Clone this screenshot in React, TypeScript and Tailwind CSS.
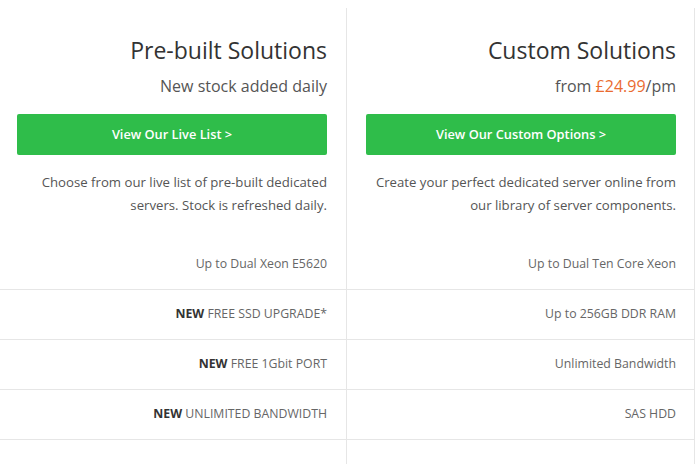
import React from "react";

const Row = ({ children }: { children: React.ReactNode }) => (
  <div className="h-[50px] border-b border-[#e6e6e6] flex items-center justify-end text-[12.3px] text-[#666]">
    {children}
  </div>
);

export default function App() {
  return (
    <div className="w-[700px] h-[464px] bg-white overflow-hidden flex font-['Open_Sans',sans-serif]">
      <div className="w-[347px] mt-[8px] border-r border-[#e6e6e6] flex flex-col shrink-0">
        <div className="pl-[17px] pr-[19px] text-right">
          <h2 className="mt-[26px] text-[23px] leading-[32px] text-[#333]">Pre-built Solutions</h2>
          <p className="mt-[8px] text-[16px] leading-[24px] text-[#555]">New stock added daily</p>
          <button className="mt-[16px] w-full h-[41px] bg-[#2fbd4a] rounded-[2px] text-white font-semibold text-[12.8px]">
            View Our Live List &gt;
          </button>
          <p className="mt-[16px] text-[13.2px] leading-[23px] text-[#555]">
            Choose from our live list of pre-built dedicated servers. Stock is refreshed daily.
          </p>
        </div>
        <div className="mt-[23px]">
          <Row><span className="pr-[19px]">Up to Dual Xeon E5620</span></Row>
          <Row><span className="pr-[19px]"><b className="font-bold text-[#333]">NEW</b> FREE SSD UPGRADE*</span></Row>
          <Row><span className="pr-[19px]"><b className="font-bold text-[#333]">NEW</b> FREE 1Gbit PORT</span></Row>
          <Row><span className="pr-[19px]"><b className="font-bold text-[#333]">NEW</b> UNLIMITED BANDWIDTH</span></Row>
        </div>
      </div>
      <div className="w-[348px] mt-[8px] border-r border-[#e6e6e6] flex flex-col shrink-0">
        <div className="pl-[19px] pr-[18px] text-right">
          <h2 className="mt-[26px] text-[23px] leading-[32px] text-[#333]">Custom Solutions</h2>
          <p className="mt-[8px] text-[16px] leading-[24px] text-[#555]">
            from <span className="text-[#ea6b30]">£24.99</span>/pm
          </p>
          <button className="mt-[16px] w-full h-[41px] bg-[#2fbd4a] rounded-[2px] text-white font-semibold text-[12.8px]">
            View Our Custom Options &gt;
          </button>
          <p className="mt-[16px] text-[13.2px] leading-[23px] text-[#555]">
            Create your perfect dedicated server online from our library of server components.
          </p>
        </div>
        <div className="mt-[23px]">
          <Row><span className="pr-[18px]">Up to Dual Ten Core Xeon</span></Row>
          <Row><span className="pr-[18px]">Up to 256GB DDR RAM</span></Row>
          <Row><span className="pr-[18px]">Unlimited Bandwidth</span></Row>
          <Row><span className="pr-[18px]">SAS HDD</span></Row>
        </div>
      </div>
    </div>
  );
}
